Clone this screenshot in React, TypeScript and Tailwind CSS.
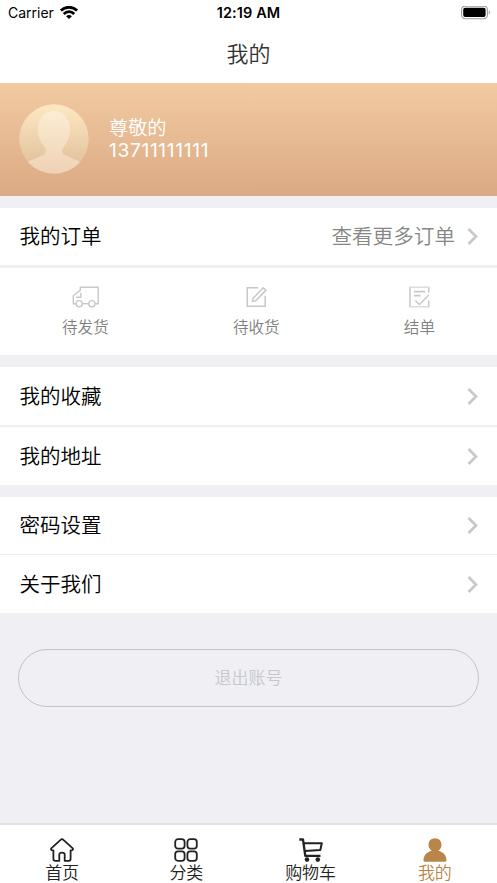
import React from "react";
import clsx from "clsx";

interface IconProps {
  className?: string;
}

interface MenuRowProps {
  title: string;
  extra?: string;
  className?: string;
}

const WifiIcon = () => (
  <svg className="w-[18px] h-[14px]" viewBox="0 0 18 14" fill="none" stroke="#000" strokeWidth="2.8">
    <path d="M0.900 4.600C5.400 0.100 12.600 0.100 17.100 4.600" />
    <path d="M3.800 8C6.800 4.900 11.200 4.900 14.200 8" />
    <path d="M9 13.100L6.100 10.200C7.900 8.600 10.100 8.600 11.900 10.200Z" fill="#000" stroke="none" />
  </svg>
);

const BatteryIcon = () => (
  <svg className="w-[30px] h-[14px]" viewBox="0 0 30 14" fill="none">
    <rect x="0.600" y="0.100" width="25.800" height="12.600" rx="3.600" stroke="#9b9b9b" strokeWidth="1.100" />
    <rect x="2.200" y="1.700" width="22.400" height="9.400" rx="2" fill="#000" />
    <path d="M27.800 4.300C29.400 5.100 29.400 7.700 27.800 8.500Z" fill="#9b9b9b" />
  </svg>
);

const Avatar = () => (
  <svg className="w-[70px] h-[70px]" viewBox="0 0 70 70">
    <defs>
      <linearGradient id="avatarBg" x1="0" y1="0" x2="0" y2="1">
        <stop offset="0" stopColor="#fde9c3" />
        <stop offset="1" stopColor="#e0bb98" />
      </linearGradient>
      <linearGradient id="avatarBody" x1="0" y1="0" x2="0" y2="1">
        <stop offset="0" stopColor="#fbedd3" />
        <stop offset="1" stopColor="#efd1b4" />
      </linearGradient>
    </defs>
    <circle cx="35" cy="35" r="34.700" fill="url(#avatarBg)" />
    <path
      d="M35 7C25 7 19 15.500 19 25.500C19 34.500 22.500 38.500 25.500 43C27.500 46 27.500 50 24 51.300L8.700 57.700A34.700 34.700 0 0 0 61.300 57.700L46 51.300C42.500 50 42.500 46 44.500 43C47.500 38.500 51 34.500 51 25.500C51 15.500 45 7 35 7Z"
      fill="url(#avatarBody)"
    />
  </svg>
);

const ChevronIcon = () => (
  <svg className="w-[11px] h-[17px]" viewBox="0 0 11 17" fill="none" stroke="#c7c7cc" strokeWidth="2.700">
    <path d="M1.500 1L9 8.500L1.500 16" />
  </svg>
);

const TruckIcon = () => (
  <svg className="w-[27px] h-[22px]" viewBox="0 0 27 22" fill="none" stroke="#c8c8c8" strokeWidth="1.400">
    <path d="M4.200 17.700H1.300V9.500L8.300 4.300V1.300H26.200V17.700H23.200" />
    <path d="M8.800 6.800V11.300H4" />
    <path d="M10.300 17.700H16.700" />
    <circle cx="7.200" cy="17.700" r="3.100" />
    <circle cx="19.800" cy="17.700" r="3.100" />
  </svg>
);

const EditIcon = () => (
  <svg className="w-[22px] h-[22px]" viewBox="0 0 22 22" fill="none" stroke="#c8c8c8" strokeWidth="1.500">
    <path d="M13 1.700H2.200V20.300H20.200V9.800" />
    <path d="M8 12.300L18.300 1.800L20.900 4.400L10.600 14.900L7.600 15.400Z" />
  </svg>
);

const ReceiptIcon = () => (
  <svg className="w-[22px] h-[22px]" viewBox="0 0 22 22" fill="none" stroke="#c8c8c8" strokeWidth="1.500">
    <path d="M20.800 6.500V1.300M2 0.700V21.300M20.800 14.500V21.300" />
    <path d="M1.200 1.300H21.500M1.200 20.700H21.500" stroke="#dddddd" />
    <path d="M5.900 5.600H17.100M5.900 9.600H12.600" strokeWidth="1.800" />
    <path d="M7.400 14.500L11.400 18.500L20.800 9" />
  </svg>
);

const HomeIcon = ({ className }: IconProps) => (
  <svg className={className} viewBox="0 0 24 24" fill="none" stroke="currentColor" strokeWidth="1.800" strokeLinejoin="round">
    <path d="M12 1.200Q12.800 1.200 13.400 1.800L22.500 10.200C23.500 11.200 22.800 12.400 21.500 12.300H20.600V20.800C20.600 22 20 22.800 18.800 22.800H14.700V16.300C14.700 14 9.300 14 9.300 16.300V22.800H5.200C4 22.800 3.400 22 3.400 20.800V12.300H2.500C1.200 12.400 0.500 11.200 1.500 10.200L10.600 1.800Q11.200 1.200 12 1.200Z" />
  </svg>
);

const CategoryIcon = ({ className }: IconProps) => (
  <svg className={className} viewBox="0 0 24 24" fill="none" stroke="currentColor" strokeWidth="1.800">
    <rect x="1.200" y="1.200" width="9.400" height="9.400" rx="2.800" />
    <rect x="13.400" y="1.200" width="9.400" height="9.400" rx="2.800" />
    <rect x="1.200" y="13.400" width="9.400" height="9.400" rx="2.800" />
    <rect x="13.400" y="13.400" width="9.400" height="9.400" rx="2.800" />
  </svg>
);

const CartIcon = ({ className }: IconProps) => (
  <svg className={className} viewBox="0 0 24 24" fill="none" stroke="currentColor" strokeWidth="2" strokeLinejoin="round">
    <path d="M0.300 1.500H4L6.300 17.800H21.500" strokeWidth="2.300" />
    <path d="M5 5.200H22.800L21.300 12L6 13" />
    <circle cx="8" cy="21.600" r="2.300" fill="currentColor" stroke="none" />
    <circle cx="18.800" cy="21.600" r="2.300" fill="currentColor" stroke="none" />
  </svg>
);

const UserIcon = ({ className }: IconProps) => (
  <svg className={className} viewBox="0 0 24 24" fill="currentColor">
    <path d="M12 0.300C8.300 0.300 5.500 3.100 5.500 6.700C5.500 9.500 6.800 11.500 8.800 12.700C3.500 14 0.500 17.500 0.500 22.600Q0.500 23.700 1.600 23.700H22.400Q23.500 23.700 23.500 22.600C23.500 17.500 20.500 14 15.200 12.700C17.200 11.500 18.500 9.500 18.500 6.700C18.500 3.100 15.700 0.300 12 0.300Z" />
  </svg>
);

const orderStatuses = [
  { label: "待发货", icon: <TruckIcon /> },
  { label: "待收货", icon: <EditIcon /> },
  { label: "结单", icon: <ReceiptIcon /> },
];

const tabs = [
  { label: "首页", Icon: HomeIcon },
  { label: "分类", Icon: CategoryIcon },
  { label: "购物车", Icon: CartIcon },
  { label: "我的", Icon: UserIcon, active: true },
];

const MenuRow: React.FC<MenuRowProps> = ({ title, extra, className }) => (
  <div className={clsx("flex items-center bg-white pl-[19.5px] pr-[19px]", className)}>
    <span className="pt-px text-[20.5px] leading-6 text-black">{title}</span>
    <div className="ml-auto flex items-center gap-3">
      {extra && <span className="pt-px text-[20.6px] leading-6 text-[#868686]">{extra}</span>}
      <ChevronIcon />
    </div>
  </div>
);

const App: React.FC = () => {
  return (
    <div className="flex h-[883px] w-[497px] flex-col overflow-hidden bg-[#efeff4] font-[Inter,'Noto_Sans_CJK_SC',sans-serif] font-[350]">
      {/* Status bar */}
      <div className="grid h-[26px] shrink-0 grid-cols-3 items-center bg-white pl-2 pr-[6px] text-[14px] leading-[26px] text-black">
        <div className="flex items-center gap-1.5">
          <span className="font-normal">Carrier</span>
          <WifiIcon />
        </div>
        <span className="-ml-0.5 text-center text-[14.5px] font-semibold tracking-[0.1px]">12:19 AM</span>
        <div className="flex justify-end">
          <BatteryIcon />
        </div>
      </div>
      <header className="flex h-[57px] shrink-0 items-center justify-center bg-white pb-0.5 text-[22px] leading-[30px] text-[#333]">
        我的
      </header>

      {/* Profile */}
      <section className="flex h-[113px] shrink-0 items-center gap-5 bg-linear-to-b from-[#f2cba2] to-[#daa983] pb-0.5 pl-[19px] text-white">
        <Avatar />
        <div className="text-[19.2px] leading-[22px]">
          <p>尊敬的</p>
          <p className="font-normal tracking-[0.65px]">13711111111</p>
        </div>
      </section>

      {/* Orders */}
      <section className="mt-3 flex shrink-0 flex-col gap-[3px]">
        <MenuRow title="我的订单" extra="查看更多订单" className="h-[57px]" />
        <div className="flex h-[87px] justify-between bg-white px-[62px] pt-[18px]">
          {orderStatuses.map((item) => (
            <div key={item.label} className="flex flex-col items-center gap-[9px]">
              {item.icon}
              <span className="text-[15.6px] leading-[22px] text-[#808080]">{item.label}</span>
            </div>
          ))}
        </div>
      </section>

      <section className="mt-3 flex shrink-0 flex-col gap-[2px]">
        <MenuRow title="我的收藏" className="h-[58px]" />
        <MenuRow title="我的地址" className="h-[58px]" />
      </section>

      <section className="mt-3 flex shrink-0 flex-col gap-px">
        <MenuRow title="密码设置" className="h-[57px]" />
        <MenuRow title="关于我们" className="h-[58px]" />
      </section>

      <button className="mx-[18px] mt-9 h-[58px] shrink-0 rounded-full border-[1.5px] border-[#c3c3c9] pt-px text-[17px] text-[#c7c7cc]">
        退出账号
      </button>

      {/* Tab bar */}
      <nav className="mt-auto grid h-[60px] shrink-0 grid-cols-4 border-t-2 border-[#e2e2e4] bg-white pt-[13px]">
        {tabs.map(({ label, Icon, active }) => (
          <div
            key={label}
            className={clsx("flex flex-col items-center", active ? "text-[#b8864b]" : "text-[#222]")}
          >
            <Icon className="h-6 w-6 shrink-0" />
            <span className="text-[17px] leading-[22px]">{label}</span>
          </div>
        ))}
      </nav>
    </div>
  );
};

export default App;
